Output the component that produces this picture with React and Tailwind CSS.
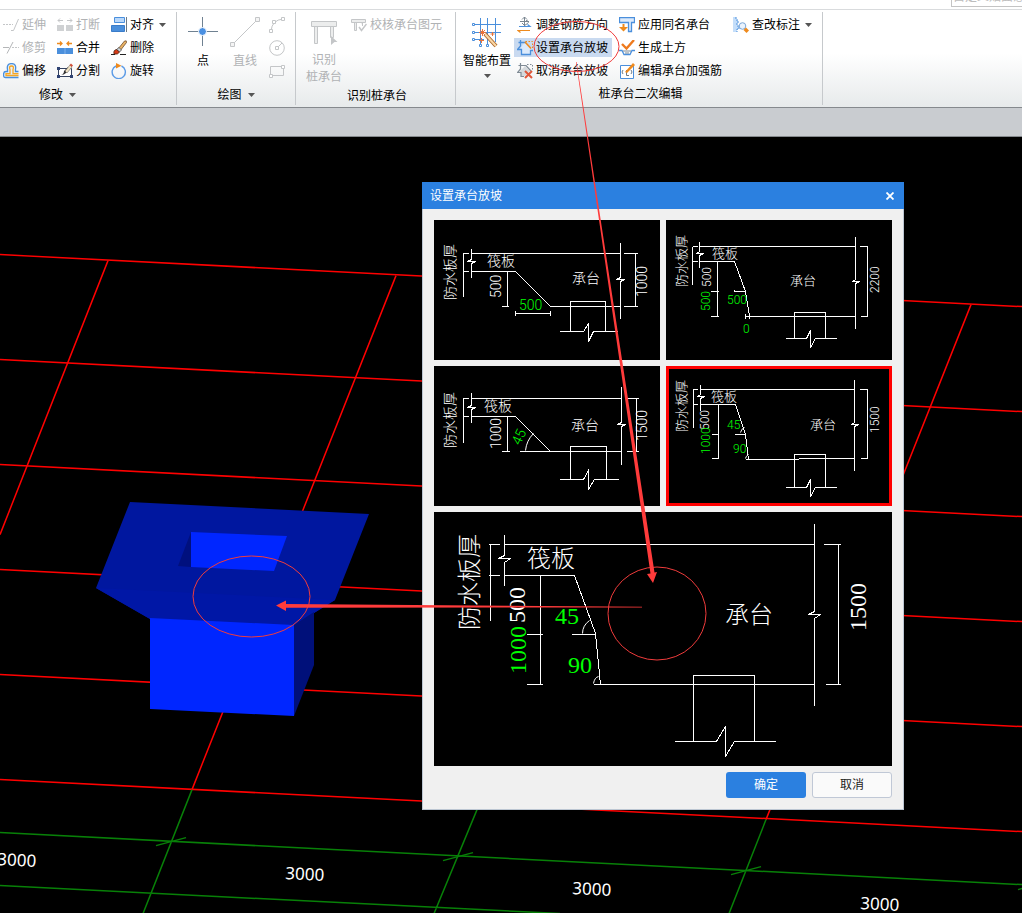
import React, { useState } from "react";

const GRAY = "#c4c6c8";
const BLUE = "#4a8fdc";
const ORANGE = "#ee8a1d";

const Icon = ({ size = 16, children }) => (
  <svg width={size} height={size} viewBox={`0 0 ${size} ${size}`} fill="none" className="shrink-0" aria-hidden="true">
    {children}
  </svg>
);

const Caret = () => (
  <svg width="7" height="4" viewBox="0 0 7 4" className="shrink-0" aria-hidden="true">
    <path d="M0 0H7L3.5 4Z" fill="#555" />
  </svg>
);

/* ---------- ribbon icons ---------- */

const ExtendIcon = () => (
  <Icon>
    <path d="M0 7.5H10" stroke={GRAY} strokeDasharray="2 1" />
    <path d="M8 13.5H10.5L15.5 2" stroke={GRAY} />
  </Icon>
);

const TrimIcon = () => (
  <Icon>
    <path d="M0 7.5H6M4 13.5L10 2" stroke="#b4b6b8" />
    <path d="M9 7.5H16" stroke={GRAY} strokeDasharray="2 1" />
  </Icon>
);

const OffsetIcon = () => (
  <Icon>
    <path d="M15.5 14.5H2.5Q.6 14.5 .6 12.5V11Q.6 8.5 3 8.5H4.5V6.5Q3.4 .6 8.5 .6Q13.6 .6 12.5 6.5V8.5H15.5" fill="#e6f0fb" stroke={BLUE} strokeWidth="1.3" />
    <path d="M15.5 12.5H3V10.7H7V6.5Q5.6 3 8.5 3Q11.4 3 10 6.5V10.7H15.5" stroke="#f5a623" strokeWidth="1.3" />
  </Icon>
);

const BreakIcon = () => (
  <Icon>
    <path d="M0 8H7V14H0ZM9 8H16V14H9Z" fill="#cfd1d3" />
    <path d="M1 3.5H6M3 1.5L1 3.5L3 5.5M10 3.5H15M13 1.5L15 3.5L13 5.5" stroke={GRAY} />
  </Icon>
);

const MergeIcon = () => (
  <Icon>
    <path d="M0 8H16V14H0Z" fill={BLUE} />
    <path d="M8 8V14" stroke="#7fb2ee" />
    <path d="M0 3.5H5M3 1.5L5 3.5L3 5.5M10 3.5H15M12 1.5L10 3.5L12 5.5" stroke={ORANGE} strokeWidth="1.3" />
  </Icon>
);

const SplitIcon = () => (
  <Icon>
    <path d="M1.5 5.5H14.5V13.5H1.5Z" fill="#fff" stroke="#33415f" />
    <path d="M0 4H3V7H0ZM0 12H3V15H0ZM13 12H16V15H13Z" fill="#2f4373" />
    <path d="M4 12Q7 11 7 8L11 4L13 6L9 10Q7 12 4 12Z" fill="#333" />
    <path d="M8 8L13 2L15 4L10 10Z" fill="#f2e3c2" stroke="#555" strokeWidth=".5" />
    <path d="M12.5 2L14 .5L16 2.5L14.7 4Z" fill="#d0503a" />
  </Icon>
);

const AlignIcon = () => (
  <Icon>
    <path d="M3.5 .5H13.5V5.5H3.5Z" fill="#b9d8fb" stroke={BLUE} />
    <path d="M.5 8.5H13.5V14.5H.5Z" fill={BLUE} stroke="#3a7cc9" />
    <path d="M15.5 0V15" stroke="#6d7a86" />
  </Icon>
);

const DeleteIcon = () => (
  <Icon>
    <path d="M7 9L13.5 1Q16 0 15.5 2.5L9 11Z" fill="#e8b265" stroke="#5b3b1c" strokeWidth=".7" />
    <path d="M5.5 9.5L8 7.5L10.5 10L8.5 12Z" fill="#cfd5da" stroke="#444" strokeWidth=".7" />
    <path d="M3 14Q2 10 5.5 9.5L8.5 12Q7 15 3 14Z" fill="#d63a16" stroke="#3a2014" strokeWidth=".7" />
    <path d="M0 14.5H4M9 14.5H15" stroke="#222" />
  </Icon>
);

const RotateIcon = () => (
  <Icon>
    <path d="M10.5 3A6.6 6.6 0 1 1 5 3" stroke="#5b9be6" strokeWidth="1.4" />
    <path d="M5 0L10.5 2.8L5 5.5Z" fill={ORANGE} />
  </Icon>
);

const PointIcon = () => (
  <Icon size={30}>
    <path d="M0 14.5H30M14.5 0V29" stroke="#6f8191" />
    <circle cx="14.5" cy="14.5" r="4" fill="#4a90e2" stroke="#fff" />
  </Icon>
);

const LineIcon = () => (
  <Icon size={30}>
    <path d="M2.5 27.5L27.5 2.5" stroke={GRAY} />
    <path d="M.5 25.5H4.5V29.5H.5ZM25.5 .5H29.5V4.5H25.5Z" fill="#f4f4f4" stroke={GRAY} />
  </Icon>
);

const ArcIcon = () => (
  <Icon>
    <path d="M2 14Q3 3 14 2" stroke={GRAY} />
    <path d="M.5 12.5H3.5V15.5H.5ZM3.5 3.5H6.5V6.5H3.5ZM12.5 .5H15.5V3.5H12.5Z" fill="#fff" stroke={GRAY} />
  </Icon>
);

const CircleIcon = () => (
  <Icon>
    <circle cx="8" cy="8" r="7.3" stroke={GRAY} />
    <path d="M8 8L13 3" stroke={GRAY} />
    <path d="M6.5 6.5H9.5V9.5H6.5Z" fill="#fff" stroke={GRAY} />
  </Icon>
);

const RectIcon = () => (
  <Icon>
    <path d="M1.5 3.5H14.5V12.5H1.5Z" stroke={GRAY} />
    <path d="M.5 11.5H3.5V14.5H.5ZM12.5 2.5H15.5V5.5H12.5Z" fill="#fff" stroke={GRAY} />
  </Icon>
);

const RecognizeIcon = () => (
  <Icon size={30}>
    <path d="M2.5 4.5H27.5V9.5H2.5ZM5.5 9.5H8.5V26.5H5.5ZM21.5 9.5H24.5V20.5H21.5Z" fill="#eceded" stroke={GRAY} />
    <path d="M22 19L28.5 25H25.5L22 28Z" fill={GRAY} />
  </Icon>
);

const CheckCapIcon = () => (
  <Icon>
    <path d="M.5 2.5H14.5V5.5H.5ZM3.5 5.5H5.5V13.5H3.5ZM9.5 5.5H11.5V9" fill="#eceded" stroke={GRAY} />
    <path d="M8 10L10.5 13.5L15.5 7" stroke={GRAY} strokeWidth="1.5" />
  </Icon>
);

const SmartIcon = () => (
  <Icon size={30}>
    <path d="M2 6.5H29M2 14.5H29M2 21.5H12M8.5 0V26M15.5 0V26M23.5 0V24" stroke={BLUE} />
    <path d="M.5 5.5H2.5V7.5H.5ZM.5 13.5H2.5V15.5H.5ZM.5 20.5H2.5V22.5H.5ZM7.5 26.5H9.5V28.5H7.5ZM14.5 26.5H16.5V28.5H14.5Z" fill="#fff" stroke={BLUE} />
    <path d="M13 16L24 28" stroke="#a8652b" strokeWidth="4" />
    <path d="M13 16L24 28" stroke="#fad7a4" strokeWidth="2.2" />
    <path d="M10.5 11V18M7 14.5H14M8 12L13 17M13 12L8 17M9.5 20V25M7 22.5H12M20.5 14V18M18.5 16H22.5" stroke="#e8743b" />
  </Icon>
);

const RebarIcon = () => (
  <Icon>
    <path d="M7.5 0V9M3 4.5H12M5 2.5L7.5 0L10 2.5M5 6L7.5 8.5L10.5 6.5Q13 4 9 3.5" stroke="#7a8691" />
    <path d="M2 9.5H13L10.5 7.5" stroke={BLUE} strokeWidth="1.2" />
    <path d="M13 13.5H1L3.5 15.5" stroke={ORANGE} strokeWidth="1.2" />
  </Icon>
);

const SlopeIcon = () => (
  <Icon>
    <path d="M3.5 8L8 2L14 8.5L15 10L13.5 14.5H4.5V10Z" fill="#dceafb" />
    <path d="M3.5 0V6L.5 9.5H4.5V14.5H13.5V10.5H16M1.5 2.5H9" stroke={BLUE} strokeWidth="1.3" />
    <path d="M8 2L14 8.5" stroke={ORANGE} strokeWidth="1.6" />
    <path d="M8.5 1.5H15.5V9" stroke={ORANGE} strokeDasharray="1.5 1.5" />
  </Icon>
);

const CancelSlopeIcon = () => (
  <Icon>
    <path d="M2 9L8 3L13 8L8 13H4V10Z" fill="#d5d9dc" />
    <path d="M3.5 0V6L.5 9.5H4V13.5H7M1.5 2.5H9L14 8" stroke="#7f8b95" strokeWidth="1.2" />
    <path d="M10 1.5H15.5V8" stroke="#7f8b95" strokeDasharray="1.5 1.5" />
    <path d="M8 8L15 15M15 8L8 15" stroke="#e0573a" strokeWidth="2" />
  </Icon>
);

const ApplyIcon = () => (
  <Icon>
    <path d="M.5 .5H15.5V5.5H12.5V14.5H9.5V5.5H.5Z" fill="#dceafb" stroke={BLUE} strokeWidth="1.3" />
    <path d="M0 10H9L4.5 14.5Z" fill={ORANGE} />
    <path d="M4.5 7V11" stroke={ORANGE} strokeWidth="2" />
  </Icon>
);

const EarthIcon = () => (
  <Icon>
    <path d="M3 4L7.5 8.5L15 0" stroke="#ee7a1d" strokeWidth="2.4" />
    <path d="M0 10.5H3L5 14.5H11L13 10.5H16" stroke={BLUE} strokeWidth="1.3" />
    <path d="M4 11H12M6 13H10" stroke="#7b8894" />
  </Icon>
);

const EditRebarIcon = () => (
  <Icon>
    <path d="M1.5 2.5H14.5V15.5H1.5Z" fill="#fff" stroke={BLUE} />
    <path d="M4 7L3 9L4 11M12 7L13 9L12 11M7.5 7V12.5H10" stroke="#6d7a86" />
    <path d="M6 9L14 0L16 2L8 10Z" fill={ORANGE} />
  </Icon>
);

const InspectIcon = () => (
  <Icon>
    <path d="M0 0H3V3H5V6H4V9H6V12H4V15H0Z" fill="#c4defa" />
    <path d="M3 0V3H5V6H4V9H6V12H4V15" stroke={BLUE} strokeDasharray="2 1" />
    <circle cx="9.5" cy="9" r="3.3" fill="#eaf3fd" stroke="#7ba7d8" />
    <path d="M13 10.5L16 13.5L13.5 16L10.5 13Z" fill={ORANGE} />
  </Icon>
);

/* ---------- ribbon ---------- */

const Tool = ({ icon, label, disabled, active, caret }) => (
  <button
    type="button"
    disabled={disabled}
    className={`flex h-[19px] items-center gap-[3px] whitespace-nowrap pl-[3px] pr-1 text-xs ${
      disabled ? "text-[#b0b2b4]" : "text-black"
    } ${active ? "bg-[#c9daf0]" : ""}`}
  >
    {icon}
    <span>{label}</span>
    {caret && (
      <span className="ml-0.5">
        <Caret />
      </span>
    )}
  </button>
);

const Group = ({ label, caret, className, children }) => (
  <section className={`flex shrink-0 flex-col border-r border-[#c6c9cc] pt-[3px] ${className}`}>
    <div className="flex h-[71px]">{children}</div>
    <div className={`flex items-center justify-center text-xs text-black ${caret ? "h-5 gap-1.5" : "h-6 pl-[3px]"}`}>
      <span>{label}</span>
      {caret && <Caret />}
    </div>
  </section>
);

const Ribbon = () => (
  <div className="flex h-[98px] overflow-hidden border-b border-[#85898d] bg-linear-to-b from-white from-45% to-[#e7eaeb] py-0.5">
    <Group label="修改" caret className="w-[177px] [&>div:last-child]:w-[115px]">
      <div className="grid w-[168px] shrink-0 grid-cols-[54px_54px_60px] content-start gap-y-1">
        <Tool icon={<ExtendIcon />} label="延伸" disabled />
        <Tool icon={<BreakIcon />} label="打断" disabled />
        <Tool icon={<AlignIcon />} label="对齐" caret />
        <Tool icon={<TrimIcon />} label="修剪" disabled />
        <Tool icon={<MergeIcon />} label="合并" />
        <Tool icon={<DeleteIcon />} label="删除" />
        <Tool icon={<OffsetIcon />} label="偏移" />
        <Tool icon={<SplitIcon />} label="分割" />
        <Tool icon={<RotateIcon />} label="旋转" />
      </div>
    </Group>

    <Group label="绘图" caret className="w-[119px]">
      <button type="button" className="ml-[11px] flex w-[30px] flex-col items-center gap-1 pt-0.5 text-xs leading-5">
        <PointIcon />
        点
      </button>
      <button type="button" disabled className="ml-3 flex w-[30px] flex-col items-center gap-1 pt-0.5 text-xs leading-5 text-[#b0b2b4]">
        <LineIcon />
        直线
      </button>
      <div className="ml-1.5 flex flex-col gap-1">
        <Tool icon={<ArcIcon />} disabled />
        <Tool icon={<CircleIcon />} disabled />
        <Tool icon={<RectIcon />} disabled />
      </div>
    </Group>

    <Group label="识别桩承台" className="w-40">
      <button type="button" disabled className="ml-2 flex w-10 flex-col items-center gap-[5px] pt-0.5 text-xs leading-[17px] text-[#b0b2b4]">
        <RecognizeIcon />
        <span>
          识别
          <br />
          桩承台
        </span>
      </button>
      <div className="ml-1 flex flex-col">
        <Tool icon={<CheckCapIcon />} label="校核承台图元" disabled />
      </div>
    </Group>

    <Group label="桩承台二次编辑" className="w-[367px]">
      <button type="button" className="ml-1.5 flex w-[50px] flex-col items-center gap-[3px] whitespace-nowrap pt-[3px] text-xs leading-5">
        <SmartIcon />
        <span>智能布置</span>
        <Caret />
      </button>
      <div className="ml-0.5 flex w-[102px] flex-col items-start gap-1">
        <Tool icon={<RebarIcon />} label="调整钢筋方向" />
        <Tool icon={<SlopeIcon />} label="设置承台放坡" active />
        <Tool icon={<CancelSlopeIcon />} label="取消承台放坡" />
      </div>
      <div className="flex w-[114px] flex-col items-start gap-1">
        <Tool icon={<ApplyIcon />} label="应用同名承台" />
        <Tool icon={<EarthIcon />} label="生成土方" />
        <Tool icon={<EditRebarIcon />} label="编辑承台加强筋" />
      </div>
      <div className="flex flex-col items-start">
        <Tool icon={<InspectIcon />} label="查改标注" caret />
      </div>
    </Group>
  </div>
);

/* ---------- slope diagrams ---------- */

const Label = ({ x, y, size, rotate = 0, green, children }) => (
  <text transform={`translate(${x} ${y}) rotate(${rotate})`} fontSize={size} fill={green ? "#00ff00" : "#fff"}>
    {children}
  </text>
);

const Diagram = ({ width, height, lines, arcs, labels, big }) => (
  <svg
    viewBox={`0 0 ${width} ${height}`}
    className={`block w-full font-light ${
      big
        ? "font-['Liberation_Serif','Noto_Sans_CJK_SC',serif]"
        : "font-['Roboto','Noto_Sans_CJK_SC',sans-serif]"
    }`}
  >
    <g transform="translate(.5 .5)" fill="none" stroke="#fff">
      <path d={lines} shapeRendering="crispEdges" />
      {arcs && <path d={arcs} />}
    </g>
    {labels.map(([text, x, y, size, rotate, green], i) => (
      <Label key={i} x={x} y={y} size={size} rotate={rotate} green={green}>
        {text}
      </Label>
    ))}
  </svg>
);

const options = [
  {
    name: "单坡 按宽度",
    lines:
      "M37 33H186M29 33V76M28 33H34M28 51H34M37 28V39L33 41H41L37 43V57M37 51H81L116 86H186" +
      "M186 22V57L182 59H190L186 61V98M201 33V86M189 33H203M189 86H203M73 51V86M67 86H74" +
      "M81 93H116M81 90V95M116 90V95M136 111V81H171V111M125 111H149L154 103V121L159 111H183",
    labels: [
      ["防水板厚", 21, 80, 14, -90],
      ["筏板", 53, 46, 14],
      ["承台", 138, 63, 14],
      ["500", 67, 78, 14, -90],
      ["1000", 213, 77, 14, -90],
      ["500", 85, 90, 14, 0, true],
    ],
  },
  {
    name: "双坡 按宽度",
    lines:
      "M33 26H189M26 26V64M26 26H31M26 41H31M33 21V31L30 33H37L33 35V47M33 41H68L79 71L83 96M79 96H189" +
      "M79 93V98M83 93V98M51 41V96M44 71H52M44 96H52M68 69V71H79M189 16V59L186 61H193L189 63V108" +
      "M201 26V96M193 26H201M194 96H201M128 118V92H159V118M119 118H140L144 110V127L149 118H170",
    labels: [
      ["防水板厚", 20, 67, 13, -90],
      ["筏板", 46, 38, 13],
      ["承台", 124, 65, 13],
      ["500", 45, 67, 12, -90],
      ["2200", 213, 73, 12, -90],
      ["500", 44, 91, 12, -90, true],
      ["500", 61, 84, 12, 0, true],
      ["0", 77, 113, 12, 0, true],
    ],
  },
  {
    name: "单坡 按角度",
    lines:
      "M37 32H187M29 32V76M28 32H34M28 50H34M37 26V39L33 41H41L37 43V56M37 50H81L116 85M85 85H187" +
      "M187 20V56L183 58H191L187 60V98M202 32V85M192 32H204M192 85H204M73 50V85M67 85H75" +
      "M136 113V80H172V113M125 113H149L154 104V123L160 113H184",
    arcs: "M99 67Q92 74 91 84",
    labels: [
      ["防水板厚", 21, 82, 14, -90],
      ["筏板", 50, 45, 14],
      ["承台", 137, 64, 14],
      ["1000", 67, 83, 14, -90],
      ["1500", 213, 75, 14, -90],
      ["45", 86, 80, 14, -65, true],
    ],
  },
  {
    name: "双坡 按角度",
    lines:
      "M34 23H188M27 23V61M26 23H31M26 38H31M34 18V28L31 30H38L34 32V44M34 38H69L79 68L82 93M79 93H132L133 92H188" +
      "M52 38V92M45 68H52M45 92H52M68 68H79M188 13V56L185 58H192L188 60V104M201 23V92M193 23H201M194 92H201" +
      "M128 121V88H159V121M119 121H140L144 113V130L149 121H170",
    arcs: "M74 66Q75 62 78 61M79 92Q79 90 82 88",
    labels: [
      ["防水板厚", 20, 66, 13, -90],
      ["筏板", 45, 35, 13],
      ["承台", 144, 63, 13],
      ["500", 43, 64, 12, -90],
      ["1500", 213, 67, 12, -90],
      ["1000", 44, 88, 12, -90, true],
      ["45", 61, 63, 12, 0, true],
      ["90", 67, 87, 12, 0, true],
    ],
  },
];

const preview = {
  lines:
    "M70 32H380M56 32V108M54 32H65M54 63H65M70 22V43L64 46H76L70 50V73M70 63H140L161 121L166 172M159 172H380" +
    "M106 63V172M92 122H108M92 172H108M137 122H161M380 11V99L374 102H386L380 106V193" +
    "M404 32V172M389 32H406M391 172H406M259 229V163H320V229M240 229H282L291 214V244L300 229H341",
  arcs: "M155 108Q148 113 148 121M164 164Q160 165 159 171",
  labels: [
    ["防水板厚", 44, 118, 24, -90],
    ["筏板", 93, 55, 24],
    ["承台", 291, 111, 24],
    ["500", 91, 111, 24, -90],
    ["1500", 432, 119, 24, -90],
    ["1000", 92, 162, 24, -90, true],
    ["45", 121, 112, 24, 0, true],
    ["90", 134, 161, 24, 0, true],
  ],
};

const SlopeDialog = () => {
  const [selected, setSelected] = useState(3);

  return (
    <div role="dialog" aria-label="设置承台放坡" className="relative w-[482px] border border-t-0 border-[#bcc6d2] bg-[#f0f0f0]">
      <div className="-mx-px flex h-[27px] items-center justify-between bg-[#2b80e0] pl-2 pr-2 text-xs text-white">
        <h2>设置承台放坡</h2>
        <button type="button" aria-label="关闭" className="flex h-3 w-3 items-center justify-center">
          <svg width="8" height="8" viewBox="0 0 8 8" aria-hidden="true">
            <path d="M.5 .5L7.5 7.5M7.5 .5L.5 7.5" stroke="#fff" strokeWidth="1.8" />
          </svg>
        </button>
      </div>
      <div className="p-[11px]">
        <div className="grid grid-cols-2 gap-1.5">
          {options.map((option, i) => (
            <button
              key={option.name}
              type="button"
              aria-label={option.name}
              aria-pressed={selected === i}
              onClick={() => setSelected(i)}
              className={`bg-black ${selected === i ? "outline-3 -outline-offset-3 outline-[#ff0000]" : ""}`}
            >
              <Diagram width={226} height={140} lines={option.lines} arcs={option.arcs} labels={option.labels} />
            </button>
          ))}
        </div>
        <div className="mt-1.5 bg-black">
          <Diagram big width={458} height={254} lines={preview.lines} arcs={preview.arcs} labels={preview.labels} />
        </div>
        <div className="mt-1.5 flex justify-end gap-1.5 text-xs">
          <button type="button" className="h-[26px] w-20 rounded-[3px] bg-[#2b80e0] text-white">
            确定
          </button>
          <button type="button" className="h-[26px] w-20 rounded-[3px] border border-[#c0c8d6] bg-[#fafafa] text-[#222]">
            取消
          </button>
        </div>
      </div>
    </div>
  );
};

/* ---------- 3D view ---------- */

const axisRows = [254, 359, 464, 569, 674, 779];
const ticks = [
  [171, 841],
  [458, 856],
  [746, 870],
  [1033, 885],
];
const spans = [
  [-3, 865],
  [285, 879],
  [572, 894],
  [860, 909],
];

const Scene = () => (
  <svg
    viewBox="0 137 1022 776"
    preserveAspectRatio="xMinYMin slice"
    className="absolute inset-0 h-full w-full font-['Noto_Sans','Noto_Sans_CJK_SC',sans-serif]"
  >
    <g stroke="#ff0000" strokeWidth="1.5" transform="translate(0 .6)">
      {axisRows.map((y) => (
        <line key={y} x1="0" y1={y} x2="1022" y2={y + 52} />
      ))}
      <path d="M108 260L0 534M396 275L192 789M684 289L477 805M971 304L766 819" />
    </g>
    <g stroke="#088008" strokeWidth="1.5" transform="translate(0 .6)">
      <path d="M0 832L1022 884M0 885L560 913M192 789L143 913M482 797L434 913M766 819L729 913" />
      {ticks.map(([x, y]) => (
        <line key={x} x1={x - 15} y1={y + 4} x2={x + 15} y2={y - 4} />
      ))}
    </g>
    {spans.map(([x, y]) => (
      <text key={x} transform={`translate(${x} ${y}) rotate(3)`} fontSize="17" fill="#fff">
        3000
      </text>
    ))}
    <path d="M130 502L369 514L335 600L314 613L294 626L150 619L96 588Z" fill="#00179f" />
    <path d="M96 588L335 600L314 613L294 626L150 619Z" fill="#0017a6" />
    <path d="M294 625L314 612V665L294 716Z" fill="#00107a" />
    <path d="M150 618L294 625V716L150 709Z" fill="#0026ff" />
    <path d="M191 532L178 566L191 567Z" fill="#00107e" />
    <path d="M191 532L287 536L274 571L191 567Z" fill="#0026ff" />
  </svg>
);

const Annotations = () => (
  <svg width="1022" height="913" viewBox="0 0 1022 913" className="pointer-events-none absolute left-0 top-0" aria-hidden="true">
    <g fill="none" stroke="#f03c3c">
      <ellipse cx="576.5" cy="46.5" rx="42.5" ry="25" />
      <ellipse cx="657" cy="613.5" rx="49" ry="46.5" />
      <ellipse cx="251.5" cy="596.5" rx="58.5" ry="40.5" />
    </g>
    <g fill="#ff3b3b">
      <path d="M576 62L576.6 62L654.5 572.5L657 572L653 583L647 574L650.5 573.5Z" />
      <path d="M276 605.5L286 600.5V604L642 606.7V607.5L286 607.7V611Z" />
    </g>
  </svg>
);

const App = () => (
  <div className="relative flex min-h-screen flex-col overflow-hidden bg-black font-['Liberation_Sans','Noto_Sans_CJK_SC',sans-serif]">
    <header className="flex h-[10px] items-end justify-end overflow-hidden border-b border-[#d9dbdd] bg-white pb-0.5">
      <input
        type="text"
        aria-label="搜索"
        placeholder="自定义贴面意义"
        className="h-5 w-[71px] shrink-0 border border-r-0 border-[#c4c4c4] bg-white pl-px text-xs placeholder:text-[#bdbdbd]"
      />
    </header>
    <Ribbon />
    <div className="h-[29px] shrink-0 border-b border-[#85898d] bg-[#c9ccd0]" />
    <main className="relative flex-1 pb-6 pl-[422px] pt-[45px]">
      <Scene />
      <SlopeDialog />
    </main>
    <Annotations />
  </div>
);

export default App;
